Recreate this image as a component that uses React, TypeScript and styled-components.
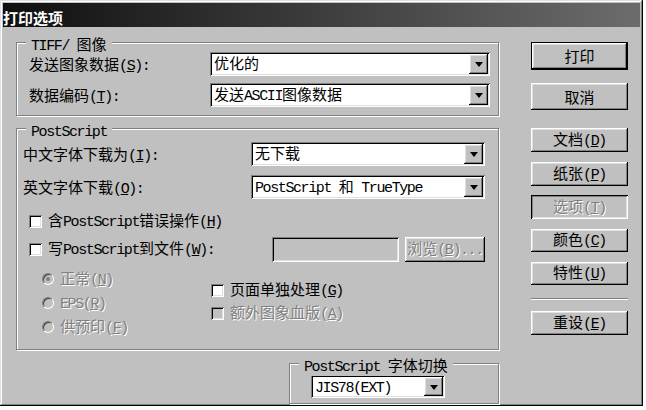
import React from "react";
import styled, { createGlobalStyle, css } from "styled-components";

const Global = createGlobalStyle`
  html, body { margin: 0; padding: 0; background: #ffffff; }
  body {
    font-family: "Noto Sans CJK SC", "Noto Sans", sans-serif;
    font-size: 15px;
    color: #000;
  }
`;

const raised = css`
  box-shadow: inset -1px -1px 0 #000, inset 1px 1px 0 #fff,
    inset -2px -2px 0 #808080, inset 2px 2px 0 #dfdfdf;
`;
const sunken = css`
  box-shadow: inset 1px 1px 0 #808080, inset -1px -1px 0 #fff,
    inset 2px 2px 0 #000, inset -2px -2px 0 #dfdfdf;
`;
const pressed = css`
  box-shadow: inset 1px 1px 0 #000, inset -1px -1px 0 #fff,
    inset 2px 2px 0 #808080, inset -2px -2px 0 #dfdfdf;
`;
const disabledText = css`
  color: #808080;
  text-shadow: 1px 1px 0 #fff;
`;

/* ---------- text with half-width Latin runs and mnemonic underline ---------- */
const TextRun = styled.span`
  white-space: nowrap;
`;
const Half = styled.span<{ $u?: boolean }>`
  font-family: "Liberation Mono", monospace;
  letter-spacing: -1.4px;
  ${(p) => p.$u && css`text-decoration: underline; text-underline-offset: 1px;`}
`;
const Full = styled.span``;

function Txt({ s }: { s: string }) {
  const segs: { t: string; h: boolean; u: boolean }[] = [];
  for (let i = 0; i < s.length; i++) {
    let c = s[i];
    let u = false;
    if (c === "_" && i + 1 < s.length) {
      u = true;
      c = s[++i];
    }
    const h = c.charCodeAt(0) < 128;
    const last = segs[segs.length - 1];
    if (last && last.h === h && last.u === u) last.t += c;
    else segs.push({ t: c, h, u });
  }
  return (
    <TextRun>
      {segs.map((g, i) =>
        g.h ? (
          <Half key={i} $u={g.u}>
            {g.t}
          </Half>
        ) : (
          <Full key={i}>{g.t}</Full>
        )
      )}
    </TextRun>
  );
}

/* ---------- window ---------- */
const Window = styled.div`
  width: 643px;
  height: 406px;
  box-sizing: border-box;
  padding: 3px;
  background: #c0c0c0;
  box-shadow: inset -1px -1px 0 #000, inset 1px 1px 0 #dfdfdf,
    inset -2px -2px 0 #808080, inset 2px 2px 0 #fff;
  display: flex;
  flex-direction: column;
  overflow: hidden;
`;

const TitleBar = styled.div`
  height: 24px;
  flex-shrink: 0;
  background: linear-gradient(90deg, #0f0f0f 0%, #6c6c6c 100%);
  color: #fff;
  font-weight: 700;
  font-size: 15px;
  line-height: 18px;
  display: flex;
  align-items: flex-end;
  white-space: nowrap;
`;

const Body = styled.div`
  flex: 1;
  display: flex;
  padding-left: 13px;
  min-height: 0;
`;

const LeftCol = styled.div`
  width: 483px;
  display: flex;
  flex-direction: column;
`;

const RightCol = styled.div`
  width: 97px;
  margin-left: 32px;
  display: flex;
  flex-direction: column;
`;

/* ---------- group boxes ---------- */
const Group = styled.div<{ $w: number; $h: number; $mt: number; $ml?: number; $pad: string }>`
  position: relative;
  box-sizing: border-box;
  width: ${(p) => p.$w}px;
  height: ${(p) => p.$h}px;
  margin-top: ${(p) => p.$mt}px;
  margin-left: ${(p) => p.$ml ?? 0}px;
  padding: ${(p) => p.$pad};
  border: 1px solid #808080;
  box-shadow: inset 1px 1px 0 #fff, 1px 1px 0 #fff;
  flex-shrink: 0;
`;

const GroupTitle = styled.span`
  position: absolute;
  top: -7px;
  left: 9px;
  padding: 0 5px;
  background: #c0c0c0;
  line-height: 16px;
  white-space: nowrap;
`;

const FieldGrid = styled.div<{ $label: number; $gap: number }>`
  display: grid;
  grid-template-columns: ${(p) => p.$label}px auto;
  row-gap: ${(p) => p.$gap}px;
  align-items: center;
`;

const FieldLabel = styled.div`
  line-height: 18px;
  white-space: nowrap;
  padding-top: 2px;
`;

/* ---------- combo box ---------- */
const ComboBox = styled.div<{ $w: number; $h: number }>`
  box-sizing: border-box;
  width: ${(p) => p.$w}px;
  height: ${(p) => p.$h}px;
  padding: 2px;
  display: flex;
  background: #fff;
  ${sunken}
`;

const ComboText = styled.div`
  flex: 1;
  min-width: 0;
  padding-left: 2px;
  line-height: 18px;
  white-space: nowrap;
`;

const DropButton = styled.div`
  width: 19px;
  flex-shrink: 0;
  background: #c0c0c0;
  display: flex;
  align-items: center;
  justify-content: center;
  ${raised}
`;

const Arrow = styled.span`
  width: 0;
  height: 0;
  border-left: 4px solid transparent;
  border-right: 4px solid transparent;
  border-top: 5px solid #000;
  margin-top: 1px;
`;

function Combo({ w, h = 24, value }: { w: number; h?: number; value: string }) {
  return (
    <ComboBox $w={w} $h={h}>
      <ComboText>
        <Txt s={value} />
      </ComboText>
      <DropButton>
        <Arrow />
      </DropButton>
    </ComboBox>
  );
}

/* ---------- checks and radios ---------- */
const OptionRow = styled.div<{ $mt?: number; $ml?: number; $w?: number; $h?: number; $dis?: boolean }>`
  display: flex;
  align-items: center;
  gap: 5px;
  height: ${(p) => p.$h ?? 18}px;
  margin-top: ${(p) => p.$mt ?? 0}px;
  margin-left: ${(p) => p.$ml ?? 0}px;
  ${(p) => (p.$w ? `width: ${p.$w}px; flex-shrink: 0;` : "")}
  line-height: 18px;
  white-space: nowrap;
  ${(p) => p.$dis && disabledText}
`;

const CheckBox = styled.span<{ $dis?: boolean }>`
  width: 13px;
  height: 13px;
  flex-shrink: 0;
  margin-right: 1px;
  background: ${(p) => (p.$dis ? "#c0c0c0" : "#fff")};
  ${sunken}
`;

const RadioCircle = styled.span<{ $checked?: boolean }>`
  position: relative;
  width: 12px;
  height: 12px;
  box-sizing: border-box;
  flex-shrink: 0;
  border-radius: 50%;
  border: 1px solid;
  border-color: #808080 #fff #fff #808080;
  background: #c0c0c0;
  box-shadow: inset 1px 1px 0 #404040;
  margin-right: 1px;
  ${(p) =>
    p.$checked &&
    css`
      &::after {
        content: "";
        position: absolute;
        left: 3px;
        top: 3px;
        width: 4px;
        height: 4px;
        border-radius: 50%;
        background: #808080;
      }
    `}
`;

const FileRow = styled.div`
  display: flex;
  align-items: center;
  margin-top: 7px;
  margin-left: 6px;
  height: 25px;
`;

const TextField = styled.div`
  box-sizing: border-box;
  width: 130px;
  height: 25px;
  background: #c0c0c0;
  ${sunken}
`;

const SmallButton = styled.div`
  box-sizing: border-box;
  width: 82px;
  height: 25px;
  margin-left: 6px;
  background: #c0c0c0;
  display: flex;
  align-items: center;
  justify-content: center;
  line-height: 18px;
  white-space: nowrap;
  ${raised}
  ${disabledText}
`;

const Lower = styled.div`
  display: flex;
  margin-top: 8px;
`;

const OptionCol = styled.div<{ $w?: number; $ml?: number; $pt?: number; $gap: number }>`
  display: flex;
  flex-direction: column;
  gap: ${(p) => p.$gap}px;
  ${(p) => (p.$w ? `width: ${p.$w}px;` : "")}
  margin-left: ${(p) => p.$ml ?? 0}px;
  padding-top: ${(p) => p.$pt ?? 0}px;
`;

/* ---------- push buttons ---------- */
const PushButton = styled.div<{ $h: number; $mt: number; $default?: boolean; $pressed?: boolean; $dis?: boolean }>`
  box-sizing: border-box;
  width: 97px;
  height: ${(p) => p.$h}px;
  margin-top: ${(p) => p.$mt}px;
  flex-shrink: 0;
  display: flex;
  align-items: center;
  justify-content: center;
  background: #c0c0c0;
  line-height: 18px;
  white-space: nowrap;
  ${raised}
  ${(p) => p.$default && css`border: 1px solid #000;`}
  ${(p) => p.$pressed && pressed}
  ${(p) => p.$dis && disabledText}
`;

const Separator = styled.div`
  margin-top: 13px;
  height: 0;
  border-top: 1px solid #808080;
  border-bottom: 1px solid #fff;
`;

export default function App() {
  return (
    <>
      <Global />
      <Window>
        <TitleBar>
          <Txt s="打印选项" />
        </TitleBar>
        <Body>
          <LeftCol>
            <Group $w={483} $h={74} $mt={15} $pad="9px 8px 0 12px">
              <GroupTitle>
                <Txt s="TIFF/ 图像" />
              </GroupTitle>
              <FieldGrid $label={181} $gap={7}>
                <FieldLabel>
                  <Txt s="发送图象数据(_S):" />
                </FieldLabel>
                <Combo w={280} value="优化的" />
                <FieldLabel>
                  <Txt s="数据编码(_T):" />
                </FieldLabel>
                <Combo w={280} value="发送ASCII图像数据" />
              </FieldGrid>
            </Group>

            <Group $w={483} $h={222} $mt={12} $pad="13px 13px 0 6px">
              <GroupTitle>
                <Txt s="PostScript" />
              </GroupTitle>
              <FieldGrid $label={228} $gap={9}>
                <FieldLabel>
                  <Txt s="中文字体下载为(_I):" />
                </FieldLabel>
                <Combo w={234} value="无下载" />
                <FieldLabel>
                  <Txt s="英文字体下载(_O):" />
                </FieldLabel>
                <Combo w={234} value="PostScript 和 TrueType" />
              </FieldGrid>

              <OptionRow $mt={13} $ml={6}>
                <CheckBox />
                <Txt s="含PostScript错误操作(_H)" />
              </OptionRow>

              <FileRow>
                <OptionRow $w={243}>
                  <CheckBox />
                  <Txt s="写PostScript到文件(_W):" />
                </OptionRow>
                <TextField />
                <SmallButton>
                  <Txt s="浏览(_B)..." />
                </SmallButton>
              </FileRow>

              <Lower>
                <OptionCol $w={169} $ml={19} $gap={6}>
                  <OptionRow $dis>
                    <RadioCircle $checked />
                    <Txt s="正常(_N)" />
                  </OptionRow>
                  <OptionRow $dis>
                    <RadioCircle />
                    <Txt s="EPS(_R)" />
                  </OptionRow>
                  <OptionRow $dis>
                    <RadioCircle />
                    <Txt s="供预印(_F)" />
                  </OptionRow>
                </OptionCol>
                <OptionCol $pt={11} $gap={5}>
                  <OptionRow>
                    <CheckBox />
                    <Txt s="页面单独处理(_G)" />
                  </OptionRow>
                  <OptionRow $dis>
                    <CheckBox $dis />
                    <Txt s="额外图象血版(_A)" />
                  </OptionRow>
                </OptionCol>
              </Lower>
            </Group>

            <Group $w={210} $h={41} $mt={13} $ml={273} $pad="11px 0 0 21px">
              <GroupTitle>
                <Txt s="PostScript 字体切换" />
              </GroupTitle>
              <Combo w={134} h={23} value="JIS78(EXT)" />
            </Group>
          </LeftCol>

          <RightCol>
            <PushButton $h={28} $mt={15} $default>
              <Txt s="打印" />
            </PushButton>
            <PushButton $h={27} $mt={13}>
              <Txt s="取消" />
            </PushButton>
            <PushButton $h={24} $mt={18}>
              <Txt s="文档(_D)" />
            </PushButton>
            <PushButton $h={24} $mt={10}>
              <Txt s="纸张(_P)" />
            </PushButton>
            <PushButton $h={24} $mt={9} $pressed $dis>
              <Txt s="选项(_T)" />
            </PushButton>
            <PushButton $h={23} $mt={10}>
              <Txt s="颜色(_C)" />
            </PushButton>
            <PushButton $h={23} $mt={10}>
              <Txt s="特性(_U)" />
            </PushButton>
            <Separator />
            <PushButton $h={24} $mt={11}>
              <Txt s="重设(_E)" />
            </PushButton>
          </RightCol>
        </Body>
      </Window>
    </>
  );
}
